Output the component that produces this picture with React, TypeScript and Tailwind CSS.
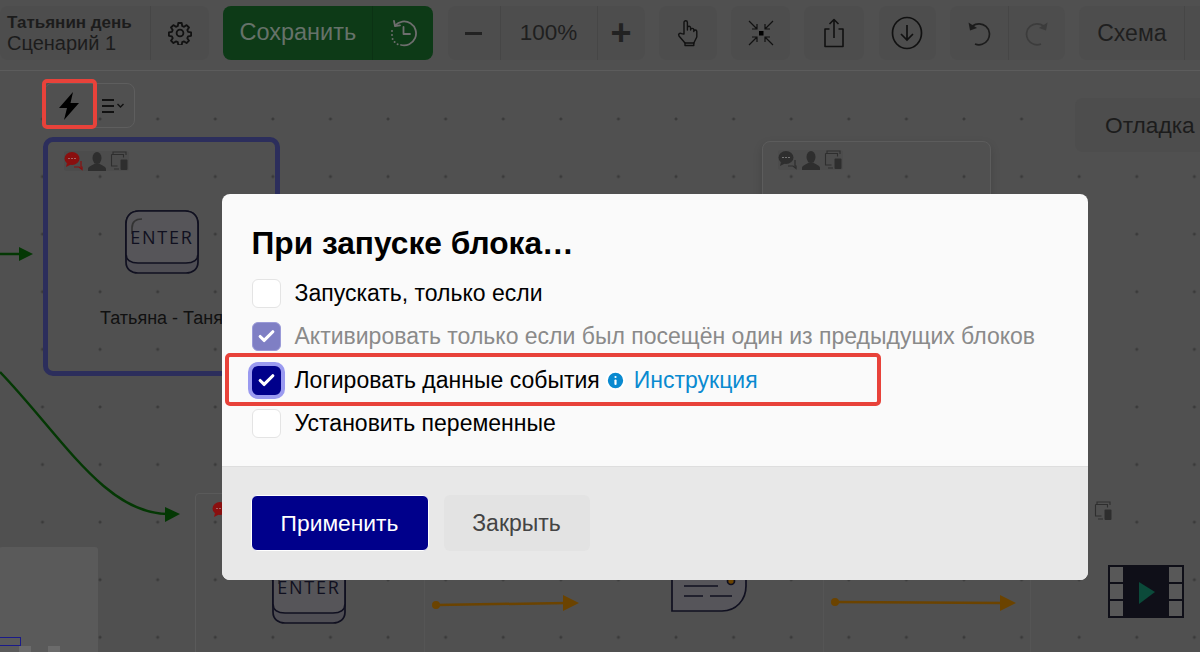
import { Check, Info } from "lucide-react";

const font = "font-['Liberation_Sans',Arial,sans-serif]";

const GearIcon = () => (
  <svg width="24" height="24" viewBox="0 0 24 24" fill="none" stroke="#111" strokeWidth="1.8" strokeLinejoin="round">
    <circle cx="12" cy="12" r="3.4" />
    <path d="M10.3 2h3.4l.5 3 1.9.8 2.5-1.7 2.4 2.4-1.7 2.5.8 1.9 3 .5v3.4l-3 .5-.8 1.9 1.7 2.5-2.4 2.4-2.5-1.7-1.9.8-.5 3h-3.4l-.5-3-1.9-.8-2.5 1.7-2.4-2.4 1.7-2.5-.8-1.9-3-.5v-3.4l3-.5.8-1.9-1.7-2.5 2.4-2.4 2.5 1.7 1.9-.8z" />
  </svg>
);

const HistoryIcon = () => (
  <svg width="28" height="28" viewBox="0 0 28 28" fill="none" stroke="#6e6e6e" strokeWidth="1.8" strokeLinecap="round" strokeLinejoin="round">
    <path d="M6 6.5A12 12 0 1 1 12 26" />
    <path d="M3 16v.1M3.6 20v.1M5.6 23v.1M8.6 25.2v.1M3 12v.1" strokeWidth="2" />
    <path d="M5 2l1 5 5-.6" />
    <path d="M14.5 8v7h6.5" />
  </svg>
);

const HandIcon = () => (
  <svg width="22" height="28" viewBox="0 0 22 28" fill="none" stroke="#111" strokeWidth="1.4" strokeLinejoin="round" strokeLinecap="round">
    <path d="M7 15V3.5a1.7 1.7 0 0 1 3.4 0V11l0-2.2a1.6 1.6 0 0 1 3.2 0V11a1.6 1.6 0 0 1 3.2 0v1.5a1.5 1.5 0 0 1 3 0V18l-3 6v2.5H8V24l-6-7c-1.2-2 1-3.6 2.4-2.4z" />
    <path d="M8 24h9" />
  </svg>
);

const CollapseIcon = () => (
  <svg width="26" height="26" viewBox="0 0 26 26" fill="none" stroke="#111" strokeWidth="1.2">
    <rect x="11" y="11" width="4.5" height="4.5" fill="#000" stroke="none" />
    <path d="M1 1l8 8M9 4v5H4M25 1l-8 8M17 4v5h5M1 25l8-8M9 22v-5H4M25 25l-8-8M17 22v-5h5" />
  </svg>
);

const ShareIcon = () => (
  <svg width="22" height="30" viewBox="0 0 22 30" fill="none" stroke="#111" strokeWidth="1.6" strokeLinejoin="round">
    <path d="M6.5 11H2v17.5h18V11h-4.5" />
    <path d="M11 20V1.5M6.5 6L11 1.5 15.500 6" />
  </svg>
);

const DownloadIcon = () => (
  <svg width="32" height="34" viewBox="0 0 32 34" fill="none" stroke="#111" strokeWidth="1.7">
    <ellipse cx="16" cy="17" rx="14.500" ry="15.500" />
    <path d="M16 9v15M10 18l6 6 6-6" />
  </svg>
);

const UndoIcon = ({ color, flip }: { color: string; flip?: boolean }) => (
  <svg width="24" height="26" viewBox="0 0 24 26" fill="none" stroke={color} strokeWidth="1.7" className={flip ? "-scale-x-100" : ""}>
    <path d="M5.500 6A10.500 10.500 0 1 1 8 24" />
    <path d="M1.500 2.500l1.500 8 7-2.500z" fill={color} stroke="none" />
  </svg>
);

const BoltIcon = () => (
  <svg width="22" height="28" viewBox="0 0 22 28" fill="#000">
    <path d="M15 0L1 16h8L6 28l15-17h-8.500z" />
  </svg>
);

const ListChevronIcon = () => (
  <svg width="24" height="16" viewBox="0 0 24 16" fill="none" stroke="#111">
    <path d="M1 2h12M1 8h12M1 14h12" strokeWidth="1.800" />
    <path d="M16.500 6l3 3 3-3" strokeWidth="1.400" />
  </svg>
);

const ChatIcon = ({ color }: { color: string }) => (
  <svg width="20" height="20" viewBox="0 0 20 20">
    <ellipse cx="8" cy="7.500" rx="7.500" ry="6.500" fill={color} />
    <path d="M3 12l-1 4 5-2.500z" fill={color} />
    <path d="M4.500 7.500h1M7.500 7.500h1M10.500 7.500h1" stroke="#bbb" strokeWidth="1.200" />
    <path d="M17 10v6h1v2.500l-3-2.500H10" fill="none" stroke={color} strokeWidth="1.200" />
  </svg>
);

const PersonIcon = () => (
  <svg width="18" height="19" viewBox="0 0 18 19" fill="#2e2e2e">
    <ellipse cx="9" cy="6" rx="4.500" ry="6" />
    <path d="M0 19v-2c0-3 5-3.500 6.500-5.500h5C13 13.500 18 14 18 17v2z" />
  </svg>
);

const DevicesIcon = () => (
  <svg width="19" height="20" viewBox="0 0 19 20" fill="none" stroke="#2e2e2e" strokeWidth="1.100">
    <path d="M16 4V1H3v2M1.500 3.500h12v3M1.500 3.500V15h6M4 18h5" />
    <rect x="10.500" y="8.500" width="7" height="10.500" rx="1" fill="#2e2e2e" stroke="none" />
  </svg>
);

const BlockIcons = ({ first }: { first: string }) => (
  <div className="flex items-center gap-[4px] rounded-[3px] bg-[#4c4c4c]">
    <ChatIcon color={first} />
    <PersonIcon />
    <DevicesIcon />
  </div>
);

const EnterIcon = () => (
  <svg width="74" height="64" viewBox="0 0 74 64" fill="none" stroke="#101020" strokeWidth="1.700">
    <path d="M1 44V14C1 6 6 1 14 1h46c8 0 13 5 13 13v38c0 7-5 11-12 11H13C6 63 1 59 1 52z" fill="#4f4e54" />
    <path d="M1 44c0 6 5 9 12 9h48c7 0 12-3 12-9V14C73 6 68 1 60 1H14C6 1 1 6 1 14z" fill="#565559" />
    <path d="M7 24v-6c0-5 3-9 10-9" stroke="#333" />
    <text x="37" y="34" textAnchor="middle" fontSize="18" letterSpacing="1.800" fill="#101020" stroke="none" fontFamily="'Open Sans',sans-serif">ENTER</text>
  </svg>
);

const MessageIcon = () => (
  <svg width="76" height="41" viewBox="0 0 76 41" fill="none" stroke="#101020" strokeWidth="1.700">
    <path d="M1 0v40h50c14 0 24-11 24-25V0" fill="#56555a" stroke="none" />
    <path d="M1 0v40h50c14 0 24-11 24-25V0" />
    <path d="M13 15h34M13 25h19M39 25h22" />
    <circle cx="60" cy="10" r="3.500" fill="#6b4300" />
  </svg>
);

const FilmIcon = () => (
  <svg width="76" height="53" viewBox="0 0 76 53">
    <rect width="76" height="53" fill="#0f0f18" />
    {[2, 19, 36].map((y) => (
      <g key={y} fill="#585858">
        <rect x="2" y={y} width="13" height="15" />
        <rect x="61" y={y} width="13" height="15" />
      </g>
    ))}
    <path d="M31 17l16 10-16 12z" fill="#0b4a3a" />
  </svg>
);

const Arrow = ({ width, rise }: { width: number; rise: number }) => (
  <svg width={width} height="18" viewBox={`0 0 ${width} 18`}>
    <circle cx="4" cy={9 + rise} r="4" fill="#6b4300" />
    <path d={`M4 ${9 + rise}L${width - 12} 9`} stroke="#6b4300" strokeWidth="2.500" />
    <path d={`M${width - 16} 1l16 8-16 8z`} fill="#6b4300" />
  </svg>
);

const Curves = () => (
  <svg width="190" height="380" viewBox="0 0 190 380" fill="none">
    <path d="M0 100H22" stroke="#043804" strokeWidth="2.500" />
    <path d="M19 93l14 7-14 7z" fill="#043804" />
    <path d="M0 218C60 280 105 360 168 360" stroke="#043804" strokeWidth="2.500" />
    <path d="M165 353l15 7-15 8z" fill="#043804" />
  </svg>
);

const Group = ({ className, children }: { className: string; children: React.ReactNode }) => (
  <div className={`flex h-[54px] shrink-0 items-stretch rounded-[8px] ${className}`}>{children}</div>
);

const Cell = ({ w, border, children }: { w: string; border?: boolean; children: React.ReactNode }) => (
  <div className={`flex items-center justify-center ${w} ${border ? "border-l border-[#464646]" : ""}`}>{children}</div>
);

const Row = ({ children, className }: { children: React.ReactNode; className?: string }) => (
  <div className={`flex h-[28px] items-center gap-[14px] text-[23px] ${className ?? ""}`}>{children}</div>
);

export default function App() {
  return (
    <div className={`relative h-[652px] w-[1200px] overflow-hidden bg-[#505050] text-[#222] ${font}`}>
      {/* Toolbar */}
      <div className="flex h-[71px] items-start gap-[14.300px] border-b border-[#5c5c5c] pt-[6px]">
        <Group className="w-[209px] bg-[#4d4d4d]">
          <div className="flex w-[150px] flex-col justify-center pl-[7px] leading-[21px]">
            <span className="text-[17px] font-bold text-[#1c1c1c]">Татьянин день</span>
            <span className="text-[20px] text-[#1c1c1c]">Сценарий 1</span>
          </div>
          <Cell w="flex-1" border><GearIcon /></Cell>
        </Group>
        <Group className="w-[210px] bg-[#0d3a17]">
          <div className="flex w-[149px] items-center justify-center text-[23.500px] text-[#66726a]">Сохранить</div>
          <div className="flex flex-1 items-center justify-center border-l border-[#0b3214]"><HistoryIcon /></div>
        </Group>
        <Group className="w-[197px] bg-[#4d4d4d]">
          <Cell w="w-[52px]"><div className="h-[3px] w-[17px] bg-[#222]" /></Cell>
          <Cell w="w-[97px]" border><span className="text-[22.500px] text-[#1f1f1f]">100%</span></Cell>
          <Cell w="flex-1" border><span className="text-[36px] leading-none font-bold text-[#222]">+</span></Cell>
        </Group>
        <Group className="w-[58px] bg-[#4d4d4d]"><Cell w="w-full"><HandIcon /></Cell></Group>
        <Group className="w-[59px] bg-[#4d4d4d]"><Cell w="w-full"><CollapseIcon /></Cell></Group>
        <Group className="w-[60px] bg-[#4d4d4d]"><Cell w="w-full"><ShareIcon /></Cell></Group>
        <Group className="w-[57px] bg-[#4d4d4d]"><Cell w="w-full"><DownloadIcon /></Cell></Group>
        <Group className="w-[115px] bg-[#4d4d4d]">
          <Cell w="w-[58px]"><UndoIcon color="#1c1c1c" /></Cell>
          <Cell w="flex-1" border><UndoIcon color="#3c3c3c" flip /></Cell>
        </Group>
        <Group className="w-[140px] bg-[#4d4d4d]">
          <Cell w="w-[105px]"><span className="text-[23px] text-[#1f1f1f]">Схема</span></Cell>
          <Cell w="flex-1" border><span /></Cell>
        </Group>
      </div>

      {/* Canvas */}
      <div className="relative h-[581px] bg-[radial-gradient(circle,#3a3a3a_1.2px,transparent_1.800px)] bg-[size:57.600px_57.600px] bg-[position:13.700px_19.200px]">
        <div className="absolute top-[83px] left-[0px]"><Curves /></div>

        <div className="absolute top-[12px] left-[44px] flex h-[45px] w-[91px] items-center rounded-[8px] border border-[#5e5e5e]">
          <div className="flex w-[48px] justify-center"><BoltIcon /></div>
          <div className="ml-[8px]"><ListChevronIcon /></div>
        </div>

        {/* Nodes */}
        <div className="absolute top-[66px] left-[43px] flex h-[239px] w-[237px] flex-col items-center rounded-[10px] border-[5px] border-[#2c2e5c]">
          <div className="mt-[9px] mb-[39px] self-start pl-[16px]"><BlockIcons first="#8a0f0f" /></div>
          <EnterIcon />
          <span className="mt-[31px] whitespace-nowrap text-[18px] text-[#111]">Татьяна - Таня</span>
        </div>

        <div className="absolute top-[70px] left-[762px] h-[200px] w-[229px] rounded-[8px] border border-[#5c5c5c] pt-[8px] pl-[15px] shadow-[0_4px_10px_rgba(0,0,0,0.15)]">
          <div className="inline-block"><BlockIcons first="#2e2e2e" /></div>
        </div>

        <div className="absolute top-[422px] left-[195px] flex h-[170px] w-[230px] flex-col rounded-[4px] border border-[#5a5a5a] pt-[7px] pl-[16px]">
          <ChatIcon color="#8a0f0f" />
        </div>
        <div className="absolute top-[489px] left-[272px]"><EnterIcon /></div>

        <div className="absolute top-[440px] left-[424px] h-[150px] w-[170px] border-l border-[#555]" />
        <div className="absolute top-[523px] left-[432px]"><Arrow width={147} rise={2} /></div>
        <div className="absolute top-[500px] left-[671px]"><MessageIcon /></div>
        <div className="absolute top-[440px] left-[823px] h-[150px] w-[208px] border-x border-[#555]" />
        <div className="absolute top-[523px] left-[831px]"><Arrow width={185} rise={-1} /></div>
        <div className="absolute top-[430px] left-[1094px]"><DevicesIcon /></div>
        <div className="absolute top-[494px] left-[1108px]"><FilmIcon /></div>

        {/* Minimap */}
        <div className="absolute top-[476px] -left-[1px] h-[120px] w-[99px] rounded-[3px] bg-[#5a5a5a]">
          <div className="mt-[90px] h-[9px] w-[22px] border border-[#1a1a8a]" />
          <div className="flex gap-[17px] pl-[20px]">
            <div className="h-[6px] w-[12px] bg-[#6b6b6b]" />
            <div className="h-[6px] w-[12px] bg-[#6b6b6b]" />
          </div>
        </div>

        <div className="absolute top-[27px] left-[1075px] flex h-[54px] w-[140px] items-center rounded-[8px] bg-[#4d4d4d] pl-[30px] text-[22.700px] whitespace-nowrap text-[#1c1c1c]">
          Отладка
        </div>
      </div>

      {/* Annotation around the bolt */}
      <div className="absolute top-[79px] left-[42px] h-[50px] w-[55px] rounded-[5px] border-[4px] border-[#e8423a]" />

      {/* Modal */}
      <div className="absolute top-[194px] left-[222px] flex h-[386px] w-[866px] flex-col overflow-hidden rounded-[8px] bg-[#fafafa] text-black">
        <div className="flex h-[272px] flex-col pt-[32px] pl-[29.500px]">
          <h2 className="mb-[19px] h-[34px] text-[31.700px] leading-[34px] font-bold">При запуске блока…</h2>
          <div className="flex flex-col gap-[15.500px]">
            <Row>
              <div className="h-[29px] w-[29px] shrink-0 rounded-[6px] border border-[#e4e4e4] bg-white" />
              Запускать, только если
            </Row>
            <Row className="text-[#8a8a8a]">
              <div className="flex h-[29px] w-[29px] shrink-0 items-center justify-center rounded-[6px] border border-[#9a9ad8] bg-[#7f7fc4]">
                <Check size={19} strokeWidth={4} color="#fff" />
              </div>
              Активировать только если был посещён один из предыдущих блоков
            </Row>
            <Row>
              <div className="flex h-[29px] w-[29px] shrink-0 items-center justify-center rounded-[6px] bg-[#00008b] ring-[4px] ring-[#9a9af0]">
                <Check size={19} strokeWidth={4} color="#fff" />
              </div>
              <span className="flex items-center">
                Логировать данные события
                <Info size={21} color="#fff" fill="#0a8ad0" strokeWidth={2.500} className="mr-[8px] ml-[5px]" />
                <span className="text-[#0a8ad0]">Инструкция</span>
              </span>
            </Row>
            <Row>
              <div className="h-[29px] w-[29px] shrink-0 rounded-[6px] border border-[#e4e4e4] bg-white" />
              Установить переменные
            </Row>
          </div>
        </div>
        <div className="flex flex-1 gap-[15px] border-t border-[#dedede] bg-[#e8e8e8] pt-[28px] pl-[28.500px]">
          <button className="h-[56px] w-[178px] rounded-[6px] border border-white bg-[#00008b] text-[22.800px] text-white">Применить</button>
          <button className="h-[56px] w-[146px] rounded-[6px] bg-[#e3e3e3] text-[23px] text-[#444]">Закрыть</button>
        </div>
      </div>

      {/* Annotation around the third row */}
      <div className="absolute top-[353px] left-[225px] h-[53px] w-[656px] rounded-[5px] border-[4px] border-[#e8423a]" />
    </div>
  );
}
